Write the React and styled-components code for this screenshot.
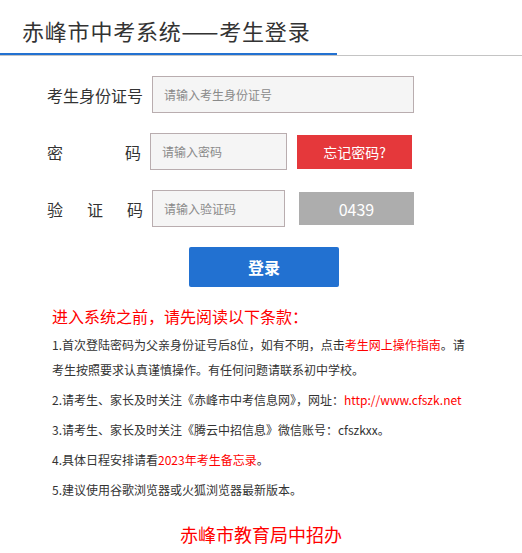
import React from 'react';
import styled, { createGlobalStyle } from 'styled-components';

const GlobalStyle = createGlobalStyle`
  body {
    margin: 0;
    background: #fff;
    font-family: 'Noto Sans CJK SC', 'Noto Sans', sans-serif;
    color: #333;
  }
`;

const Page = styled.div`
  width: 522px;
  min-height: 553px;
`;

const Header = styled.div`
  border-bottom: 1px solid #c4c4c4;
  height: 55px;
`;

const HeaderTab = styled.h1`
  width: 315px;
  margin: 0;
  padding: 19px 0 12px 22px;
  font-size: 22px;
  line-height: 22px;
  letter-spacing: 0.8px;
  font-weight: normal;
  color: #333;
  border-bottom: 2px solid #2271d1;
`;

const Form = styled.div`
  display: flex;
  flex-direction: column;
  gap: 20px;
  padding: 20px 0 0 47px;
`;

const Row = styled.div`
  display: flex;
  align-items: center;
  height: 37px;
`;

const Label = styled.label`
  display: flex;
  justify-content: space-between;
  width: ${(p) => p.$width || 96}px;
  font-size: 16px;
  color: #333;
`;

const Input = styled.input`
  box-sizing: border-box;
  width: ${(p) => p.$width}px;
  height: 37px;
  margin-left: ${(p) => p.$offset}px;
  padding: 0 0 0 11px;
  border: 1px solid #b9adaf;
  background: #f5f5f5;
  font-family: inherit;
  font-size: 12px;
  outline: none;

  &::placeholder {
    color: #8a8a8a;
  }
`;

const SideBox = styled.div`
  display: flex;
  align-items: center;
  justify-content: center;
  width: 115px;
  height: ${(p) => p.$height}px;
  margin-left: ${(p) => p.$offset}px;
  background: ${(p) => p.$bg};
  color: #fff;
  font-size: ${(p) => p.$size}px;
`;

const LoginButton = styled.button`
  width: 150px;
  height: 40px;
  margin: 20px 0 0 189px;
  border: none;
  border-radius: 2px;
  background: #2271d1;
  color: #fff;
  font-family: inherit;
  font-size: 16px;
  font-weight: bold;
`;

const Notice = styled.div`
  padding: 17px 0 0 52px;
  width: 420px;
`;

const NoticeTitle = styled.h2`
  margin: 0;
  font-size: 16px;
  line-height: 24px;
  font-weight: normal;
  color: #ff0000;
`;

const Item = styled.p`
  margin: ${(p) => (p.$first ? 4 : 5)}px 0 0;
  font-size: 12px;
  line-height: 25px;
  color: #333;
`;

const Red = styled.span`
  color: #ff0000;
`;

const Footer = styled.div`
  margin-top: 20px;
  text-align: center;
  font-size: 18px;
  line-height: 24px;
  color: #ff0000;
`;

const spread = (text) => text.split('').map((c, i) => <span key={i}>{c}</span>);

export default function App() {
  return (
    <Page>
      <GlobalStyle />
      <Header>
        <HeaderTab>赤峰市中考系统——考生登录</HeaderTab>
      </Header>

      <Form>
        <Row>
          <Label>{spread('考生身份证号')}</Label>
          <Input $width={262} $offset={9} placeholder="请输入考生身份证号" />
        </Row>
        <Row>
          <Label $width={94}>{spread('密码')}</Label>
          <Input $width={137} $offset={9} placeholder="请输入密码" />
          <SideBox $height={34} $offset={10} $bg="#e5383b" $size={14}>
            忘记密码?
          </SideBox>
        </Row>
        <Row>
          <Label>{spread('验证码')}</Label>
          <Input $width={133} $offset={9} placeholder="请输入验证码" />
          <SideBox $height={33} $offset={14} $bg="#adadad" $size={16}>
            0439
          </SideBox>
        </Row>
      </Form>

      <LoginButton>登录</LoginButton>

      <Notice>
        <NoticeTitle>进入系统之前，请先阅读以下条款：</NoticeTitle>
        <Item $first>
          1.首次登陆密码为父亲身份证号后8位，如有不明，点击<Red>考生网上操作指南</Red>。请考生按照要求认真谨慎操作。有任何问题请联系初中学校。
        </Item>
        <Item>
          2.请考生、家长及时关注《赤峰市中考信息网》，网址：<Red>http://www.cfszk.net</Red>
        </Item>
        <Item>3.请考生、家长及时关注《腾云中招信息》微信账号：cfszkxx。</Item>
        <Item>
          4.具体日程安排请看<Red>2023年考生备忘录</Red>。
        </Item>
        <Item>5.建议使用谷歌浏览器或火狐浏览器最新版本。</Item>
      </Notice>

      <Footer>赤峰市教育局中招办</Footer>
    </Page>
  );
}
